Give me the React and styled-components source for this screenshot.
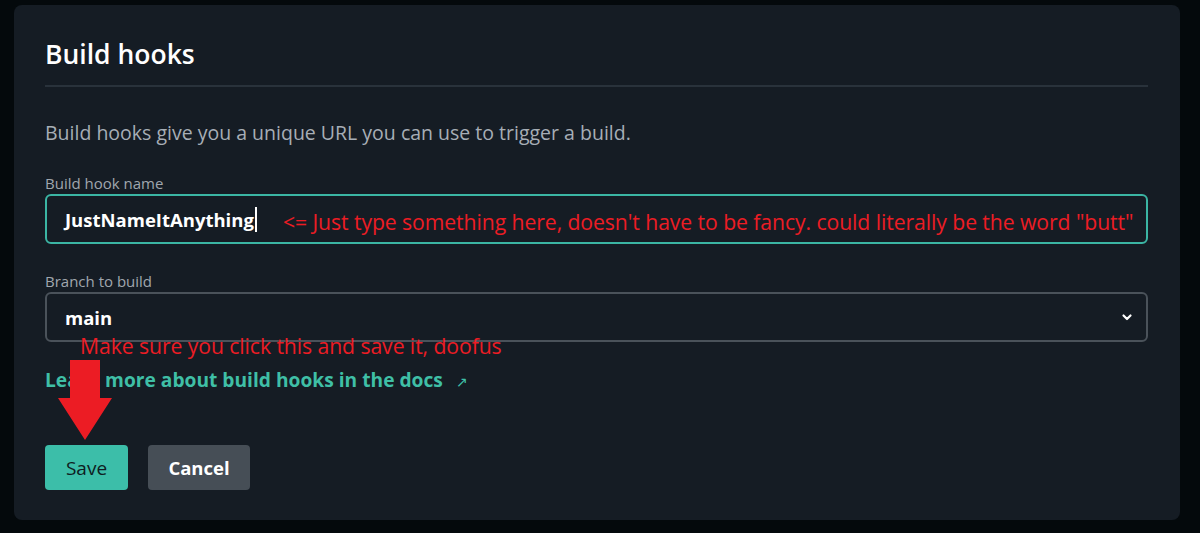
import styled, { createGlobalStyle } from "styled-components";

const GlobalStyle = createGlobalStyle`
  html, body {
    margin: 0;
    padding: 0;
    background: #04090c;
  }
  body {
    font-family: "Open Sans", "Noto Sans", sans-serif;
  }
`;

export default function App() {
  return (
    <>
      <GlobalStyle />
      <Page>
        <Card>
          <Title>Build hooks</Title>
          <Divider />
          <Description>
            Build hooks give you a unique URL you can use to trigger a build.
          </Description>

          <Field>
            <Label>Build hook name</Label>
            <InputBox focused>
              <Value>JustNameItAnything</Value>
              <Caret />
              <Note style={{ left: 236, top: 14 }}>
                &lt;= Just type something here, doesn't have to be fancy. could
                literally be the word "butt"
              </Note>
            </InputBox>
          </Field>

          <Field>
            <Label>Branch to build</Label>
            <InputBox>
              <Value>main</Value>
              <Chevron viewBox="0 0 12 12">
                <path
                  d="M2.5 4.5 L6 8 L9.5 4.5"
                  fill="none"
                  stroke="#fff"
                  strokeWidth="2.2"
                  strokeLinecap="round"
                  strokeLinejoin="round"
                />
              </Chevron>
            </InputBox>
          </Field>

          <LinkRow>
            <DocsLink>
              Learn more about build hooks in the docs <Ext>↗</Ext>
            </DocsLink>
            <Note style={{ left: 35, top: -33 }}>
              Make sure you click this and save it, doofus
            </Note>
            <Arrow viewBox="0 0 54 80">
              <path d="M12 0 H42 V38 H54 L27 80 L0 38 H12 Z" fill="#ec1c24" />
            </Arrow>
          </LinkRow>

          <Actions>
            <Button primary>Save</Button>
            <Button>Cancel</Button>
          </Actions>
        </Card>
      </Page>
    </>
  );
}

const Page = styled.div`
  padding: 5px 20px 13px 14px;
`;

const Card = styled.div`
  width: 1166px;
  height: 515px;
  box-sizing: border-box;
  background: #151c24;
  border-radius: 8px;
  padding: 31px 32px 0 31px;
  position: relative;
`;

const Title = styled.h2`
  margin: 0;
  font-size: 26.5px;
  font-weight: 600;
  line-height: 36px;
  color: #ffffff;
`;

const Divider = styled.div`
  height: 2px;
  background: #29323b;
  margin-top: 13px;
`;

const Description = styled.p`
  margin: 33px 0 0;
  font-size: 19.5px;
  line-height: 26px;
  color: #a7aeb6;
`;

const Field = styled.div`
  margin-top: 27px;
`;

const Label = styled.div`
  font-size: 15px;
  line-height: 20px;
  color: #a0a7ae;
  margin-bottom: 1px;
`;

const InputBox = styled.div`
  position: relative;
  height: 50px;
  box-sizing: border-box;
  border: 2px solid ${(p) => (p.focused ? "#3bb5a4" : "#4a525a")};
  border-radius: 6px;
  display: flex;
  align-items: center;
  padding: 0 18px;
`;

const Value = styled.span`
  font-size: 18.5px;
  font-weight: 700;
  color: #ffffff;
`;

const Caret = styled.span`
  width: 2px;
  height: 25px;
  background: #ffffff;
  margin-left: 1px;
`;

const Chevron = styled.svg`
  width: 12px;
  height: 12px;
  margin-left: auto;
  margin-right: -5px;
`;

const Note = styled.span`
  position: absolute;
  white-space: nowrap;
  font-family: "Open Sans", "Noto Sans", sans-serif;
  font-size: 21.2px;
  line-height: 24px;
  letter-spacing: -0.08px;
  color: #ec1c24;
`;

const LinkRow = styled.div`
  position: relative;
  margin-top: 25px;
`;

const DocsLink = styled.a`
  font-size: 19.2px;
  font-weight: 700;
  line-height: 26px;
  color: #3fbfa6;
  cursor: pointer;
`;

const Ext = styled.span`
  font-weight: 400;
  font-size: 14px;
  margin-left: 8px;
`;

const Arrow = styled.svg`
  position: absolute;
  left: 13px;
  top: -7px;
  width: 54px;
  height: 80px;
`;

const Actions = styled.div`
  display: flex;
  gap: 20px;
  margin-top: 50px;
`;

const Button = styled.button`
  height: 45px;
  padding: 0;
  border: none;
  border-radius: 4px;
  font-family: "Open Sans", "Noto Sans", sans-serif;
  font-size: ${(p) => (p.primary ? "19px" : "18.5px")};
  font-weight: ${(p) => (p.primary ? 400 : 700)};
  background: ${(p) => (p.primary ? "#3cbea9" : "#464e56")};
  color: ${(p) => (p.primary ? "#0f1d22" : "#ffffff")};
  width: ${(p) => (p.primary ? "83px" : "102px")};
`;
